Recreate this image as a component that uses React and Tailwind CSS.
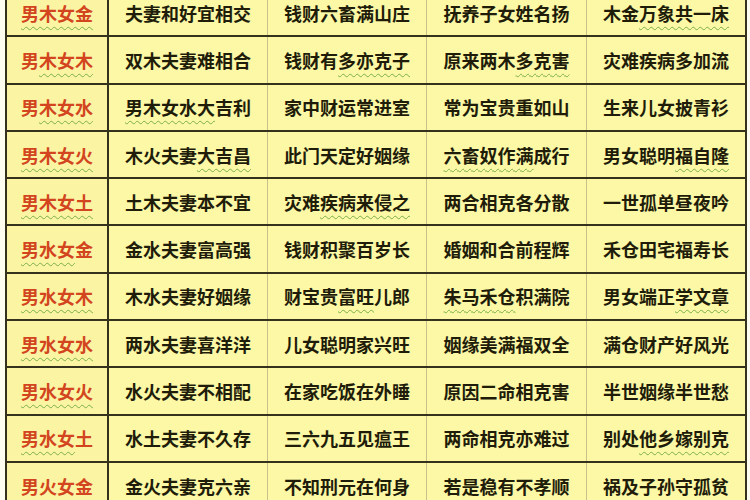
import React from "react";

// [label, [col2, col3, col4, col5]] — each text is a list of [text, underlined]
const rows = [
  [[["男木女金", true]], [["夫妻和好宜相交"]], [["钱财六畜满山庄"]], [["抚养子女姓名扬"]], [["木金", false], ["万象共一床", true]]],
  [[["男", false], ["木女木", true]], [["双木夫妻难相合"]], [["钱财有", false], ["多亦克子", true]], [["原来两木", false], ["多克害", true]], [["灾难疾病多加流"]]],
  [[["男", false], ["木女水", true]], [["男木女水大", true], ["吉利", false]], [["家中财运常进室"]], [["常为宝贵重如山"]], [["生来儿女披青衫"]]],
  [[["男木女火", true]], [["木火夫妻", false], ["大吉昌", true]], [["此门天定好姻缘"]], [["六畜奴作满", true], ["成行", false]], [["男女聪明", false], ["福自隆", true]]],
  [[["男木女土", true]], [["土木夫妻本不宜"]], [["灾难", false], ["疾病来侵之", true]], [["两合相克各分散"]], [["一世孤单昼夜吟"]]],
  [[["男水女", true], ["金", false]], [["金水夫妻富高强"]], [["钱财积聚百岁长"]], [["婚姻和合前程辉"]], [["禾仓田宅福寿长"]]],
  [[["男水女木", true]], [["木水夫妻好姻缘"]], [["财宝贵", false], ["富旺", true], ["儿郎", false]], [["朱马禾仓", true], ["积满院", false]], [["男女端正", false], ["学文章", true]]],
  [[["男水女水", true]], [["两水夫妻喜洋洋"]], [["儿女聪明家兴旺"]], [["姻缘美满福双全"]], [["满仓财产好风光"]]],
  [[["男水女火", true]], [["水火夫妻不相配"]], [["在家吃饭在外睡"]], [["原因二命相克害"]], [["半世姻缘半世愁"]]],
  [[["男水女", true], ["土", false]], [["水土夫妻不久存"]], [["三六九五见瘟王"]], [["两命相克亦难过"]], [["别处", false], ["他乡嫁别克", true]]],
  [[["男火女金"]], [["金火夫妻克六亲"]], [["不知刑元在何身"]], [["若是稳有不孝顺"]], [["祸及子孙守孤贫"]]],
];

const widths = ["w-[102px]", "w-[159px]", "w-[159px]", "w-[160px]", "w-[158px]"];
const borders = [
  "border-r-2 border-[#34321c] bg-[#fbf4a3]",
  "border-r border-[#c9c08c] bg-[#fcf8a6]",
  "border-r border-[#c9c08c] bg-[#fcf8a6]",
  "border-r border-[#c9c08c] bg-[#fcf8a6]",
  "bg-[#fcf8a6]",
];

function Cell({ parts, col }) {
  return (
    <div className={`${widths[col]} ${borders[col]} h-full flex items-center justify-center`}>
      <span className={col === 0 ? "text-[#d2451e]" : "text-[#1f1d0a]"}>
        {parts.map(([t, u], i) => (
          <span
            key={i}
            className={u ? "underline decoration-wavy decoration-[#7cae4a] decoration-1 underline-offset-[5px]" : ""}
          >
            {t}
          </span>
        ))}
      </span>
    </div>
  );
}

export default function App() {
  return (
    <div
      className="w-[750px] h-[500px] overflow-hidden bg-[#fdfdf0]"
      style={{ fontFamily: '"Noto Sans CJK SC", "Noto Sans", sans-serif' }}
    >
      <div className="ml-[5px] mt-[-10px] w-[742px] border-x-2 border-[#34321c] text-[18px] font-semibold leading-none">
        {rows.map((cells, r) => (
          <div key={r} className="flex h-[47.3px] border-b-2 border-[#34321c]">
            {cells.map((parts, c) => (
              <Cell key={c} parts={parts} col={c} />
            ))}
          </div>
        ))}
      </div>
    </div>
  );
}
